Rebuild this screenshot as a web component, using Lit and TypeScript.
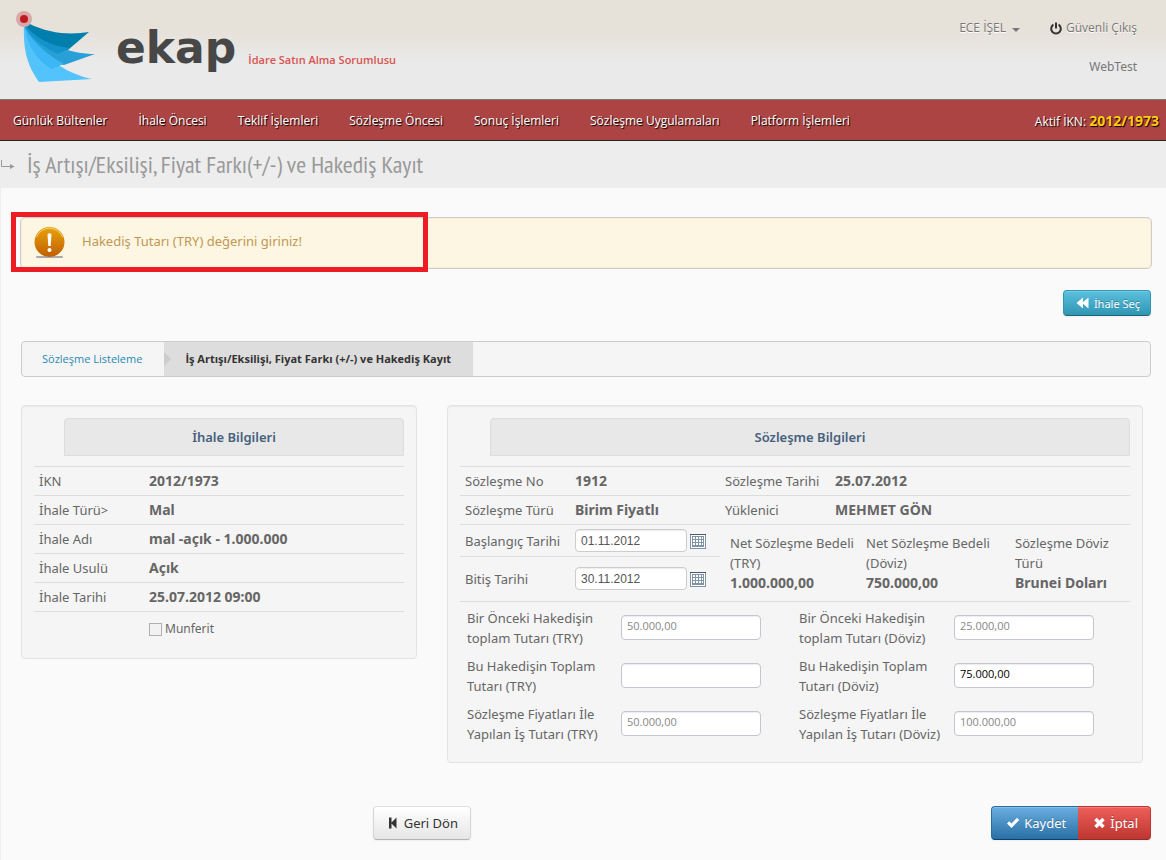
import { LitElement, html, css, svg } from "lit";
import { customElement, property } from "lit/decorators.js";

type Pair = [string, string];

const menu = [
  "Günlük Bültenler",
  "İhale Öncesi",
  "Teklif İşlemleri",
  "Sözleşme Öncesi",
  "Sonuç İşlemleri",
  "Sözleşme Uygulamaları",
  "Platform İşlemleri",
];

const tender: Pair[] = [
  ["İKN", "2012/1973"],
  ["İhale Türü>", "Mal"],
  ["İhale Adı", "mal -açık - 1.000.000"],
  ["İhale Usulü", "Açık"],
  ["İhale Tarihi", "25.07.2012 09:00"],
];

const contract: [Pair, Pair][] = [
  [["Sözleşme No", "1912"], ["Sözleşme Tarihi", "25.07.2012"]],
  [["Sözleşme Türü", "Birim Fiyatlı"], ["Yüklenici", "MEHMET GÖN"]],
];

const totals: Pair[] = [
  ["Net Sözleşme Bedeli (TRY)", "1.000.000,00"],
  ["Net Sözleşme Bedeli (Döviz)", "750.000,00"],
  ["Sözleşme Döviz Türü", "Brunei Doları"],
];

const amounts = [
  { id: "prev-try", label: "Bir Önceki Hakedişin toplam Tutarı (TRY)", value: "50.000,00", locked: true },
  { id: "prev-fx", label: "Bir Önceki Hakedişin toplam Tutarı (Döviz)", value: "25.000,00", locked: true },
  { id: "cur-try", label: "Bu Hakedişin Toplam Tutarı (TRY)", value: "", locked: false },
  { id: "cur-fx", label: "Bu Hakedişin Toplam Tutarı (Döviz)", value: "75.000,00", locked: false },
  { id: "work-try", label: "Sözleşme Fiyatları İle Yapılan İş Tutarı (TRY)", value: "50.000,00", locked: true },
  { id: "work-fx", label: "Sözleşme Fiyatları İle Yapılan İş Tutarı (Döviz)", value: "100.000,00", locked: true },
];

const calendarIcon = svg`
  <svg width="16" height="16" viewBox="0 0 16 16" aria-hidden="true">
    <rect x="0.5" y="1.5" width="15" height="14" fill="#fff" stroke="#7d93a8"/>
    <rect x="0" y="1" width="16" height="1" fill="#4a5a6b"/>
    <rect x="2" y="3" width="12" height="11" fill="#8194a6"/>
    <path d="M3 4h2v2H3zM6 4h2v2H6zM9 4h2v2H9zM12 4h1v2h-1zM3 7h2v2H3zM6 7h2v2H6zM9 7h2v2H9zM12 7h1v2h-1zM3 10h2v2H3zM6 10h2v2H6zM9 10h2v2H9zM12 10h1v2h-1z" fill="#fff"/>
  </svg>`;

@customElement("date-row")
class DateRow extends LitElement {
  @property() label = "";
  @property() value = "";

  static styles = css`
    :host { display: block; }
    .row { display: grid; grid-template-columns: 110px 112px auto; align-items: center; justify-content: start; }
    input {
      box-sizing: border-box; width: 112px; height: 23px; padding: 0 5px; border: 1px solid #ccc; border-radius: 4px;
      background: #fff; color: #555; font: 12px "Liberation Sans", sans-serif; box-shadow: inset 0 1px 1px rgba(0, 0, 0, .075);
    }
    button { display: flex; margin: 0 0 0 3px; padding: 0; border: 0; background: none; }
  `;

  render() {
    return html`
      <div class="row">
        <label for="date">${this.label}</label>
        <input id="date" type="text" .value=${this.value}>
        <button type="button" aria-label="Takvim">${calendarIcon}</button>
      </div>`;
  }
}

@customElement("app-root")
class AppRoot extends LitElement {
  static styles = css`
    :host {
      display: block; min-height: 100vh; background: #fafafa; color: #666;
      font: 13px/20px "Noto Sans", "Open Sans", sans-serif;
    }
    a { color: inherit; text-decoration: none; }
    button { font-family: inherit; cursor: pointer; }
    h1, h2 { margin: 0; }
    table { width: 100%; border-collapse: collapse; table-layout: fixed; }
    th, td { padding: 4px 5px; text-align: left; font-weight: 400; border-bottom: 1px solid #ddd; }
    td { font-weight: 700; font-size: 14px; }

    .header {
      box-sizing: border-box; height: 100px; display: flex; justify-content: space-between; padding: 0 29px 0 14px;
      background: linear-gradient(#e6e1d9 0, #e6e1d9 30px, #eaeaea 62px); border-bottom: 1px solid #777;
    }
    .brand { display: flex; align-items: flex-start; }
    .mark { display: block; margin-top: 10px; }
    .word { margin: 24px 0 0 20px; font: 700 44px/48px "DejaVu Sans", sans-serif; color: #474747; }
    .role { margin: 50px 0 0 12px; font: 600 11px/20px "Open Sans", sans-serif; color: #d9534f; }
    .account { display: flex; flex-direction: column; align-items: flex-end; gap: 19px; padding-top: 18px; font-size: 12px; color: #777; }
    .links { display: flex; gap: 30px; text-shadow: 0 1px 0 #fff; }
    .links a { display: flex; align-items: center; gap: 4px; font-family: "Open Sans", sans-serif; }
    .caret { margin: 4px 0 0 2px; border: 4px solid transparent; border-top-color: #777; border-bottom: 0; }

    .nav {
      display: flex; align-items: center; justify-content: space-between; height: 38px; padding: 2px 7px 0 13px;
      background: #ac4444; border-bottom: 1px solid #222; color: #fff; text-shadow: 1px 1px 1px #000;
      font-family: "Open Sans", sans-serif; font-size: 12px;
    }
    .menu { display: flex; gap: 31px; margin: 0; padding: 0; list-style: none; }
    .active b { color: #fc1; font-size: 14px; }

    .title { display: flex; align-items: center; gap: 12px; height: 47px; background: #ededed; }
    .title h1 { font: 400 24px/32px "PT Sans Narrow", "Open Sans Condensed", "Roboto Condensed", "Noto Sans Condensed", "Liberation Sans", sans-serif; color: #999; }

    .main { padding: 29px 15px 20px 20px; border-left: 1px solid #eee; }
    .alert {
      position: relative; box-sizing: border-box; height: 52px; display: flex; align-items: center; gap: 17px; margin: 0 -1px; padding: 0 13px;
      border: 1px solid #ccc; border-radius: 5px; background: #fdf6e3; color: #c09853;
      box-shadow: inset 0 0 1px 1px #fbeed5;
    }
    .alert p { margin: 0 0 5px; }
    .outline { position: absolute; left: -10px; top: -6px; width: 407px; height: 50px; border: 5px solid #ed1c24; }

    .pick-row { display: flex; justify-content: flex-end; margin: 21px 0 25px; }
    .btn {
      box-sizing: border-box; display: flex; align-items: center; justify-content: center; height: 34px;
      border: 1px solid; border-radius: 4px; font-size: 13px; color: #fff; text-shadow: 0 -1px 0 rgba(0, 0, 0, .25);
      box-shadow: inset 0 1px 0 rgba(255, 255, 255, .2), 0 1px 2px rgba(0, 0, 0, .05);
    }
    .info { height: 26px; padding: 0 10px 0 12px; gap: 5px; font-size: 11px; border-color: #2f96b4 #2f96b4 #1f6377; background: linear-gradient(#5bc0de, #2f96b4); }
    .plain { padding: 0 12px; gap: 4px; color: #333; text-shadow: none; border-color: #e0e0e0 #d5d5d5 #b3b3b3; background: linear-gradient(#fff, #e6e6e6); }
    .primary { padding: 0 12px 0 14px; gap: 4px; border-color: #2a6da0 #2a6da0 #08406f; background: linear-gradient(#6aafe0, #2a6fa5); border-radius: 4px 0 0 4px; border-right: 0; }
    .danger { padding: 0 12px 0 15px; gap: 4px; border-color: #bd362f #bd362f #952a25; background: linear-gradient(#ee5f5b, #bd362f); border-radius: 0 4px 4px 0; border-left: 0; }

    .crumbs { display: flex; box-sizing: border-box; height: 36px; border: 1px solid #ccc; border-radius: 4px; background: #f5f5f5; font: 11px/34px "Open Sans", sans-serif; }
    .crumbs a { padding: 0 22px 0 20px; color: #2a8ab5; }
    .crumbs .here { position: relative; padding: 0 22px 0 21px; background: #ddd; color: #333; font-weight: 700; }
    .here::before { content: ""; position: absolute; left: 0; top: 10px; border: 7px solid transparent; border-left-color: #ccc; border-right: 0; }

    .panels { display: grid; grid-template-columns: 396fr 696fr; gap: 30px; align-items: start; margin: 28px 8px 0 0; }
    .panel { box-sizing: border-box; padding: 12px; border: 1px solid #e3e3e3; border-radius: 4px; background: #f5f5f5; box-shadow: inset 0 1px 1px rgba(0, 0, 0, .05); }
    .panel h2 {
      margin: 0 0 10px 30px; border: 1px solid #ddd; border-radius: 4px 4px 0 0; background: #e8e8e8;
      font-size: 13px; line-height: 36px; font-weight: 600; color: #46607c; text-align: center;
    }
    .panel table { border-top: 1px solid #ddd; }
    .tender col:first-child { width: 110px; }
    .single { display: flex; align-items: center; gap: 3px; padding: 7px 0 7px 115px; font-size: 12px; }
    .single input { appearance: none; width: 13px; height: 13px; margin: 0; border: 1px solid #b0b0b0; background: #f2f2f2; }

    .middle { display: grid; grid-template-columns: 260px 1fr; border-bottom: 1px solid #ddd; }
    .dates date-row { padding: 4px 5px; }
    .dates date-row:first-child { border-bottom: 1px solid #ddd; }
    .dates date-row:last-child { padding: 10px 5px 11px; }
    .totals { display: grid; grid-template-columns: 136px 149px 1fr; margin: 0; padding: 8px 0 0 10px; }
    .totals dt { padding-right: 10px; }
    .totals dd { margin: 0; font-weight: 700; font-size: 14px; }
    .amounts { display: grid; grid-template-columns: 144px 140px 173px 140px; row-gap: 8px; column-gap: 10px; padding: 6px 0 6px 7px; }
    .amounts label:nth-of-type(even) { margin-left: 28px; }
    .amounts input {
      box-sizing: border-box; width: 140px; height: 25px; margin-top: 7px; padding: 0 5px 4px; border: 1px solid #c5c5ce; border-radius: 4px;
      background: #fff; color: #000; font: 11px "Open Sans", sans-serif; box-shadow: inset 0 1px 1px rgba(0, 0, 0, .075);
    }
    .amounts input:disabled { color: #888; }

    .actions { display: grid; grid-template-columns: 450px 1fr; margin-top: 43px; justify-items: end; }
    .group { display: flex; }
  `;

  private mark() {
    return svg`
      <svg class="mark" width="82" height="74" viewBox="0 0 82 74" aria-hidden="true">
        <path d="M14 13C35 24 57 25 75 22L48 45C32 40 20 28 10 15Z" fill="#007fac"/>
        <path d="M11 15C25 34 58 44 81 44L50 55C30 52 16 38 10 16Z" fill="#289fd7"/>
        <path d="M10 15C18 43 53 64 78 69L25 72C14 56 9 42 10 15Z" fill="#52c3fb"/>
        <path d="M12 16C22 29 38 36 56 38L44 44C28 37 17 28 11 16Z" fill="#1492cb"/>
        <path d="M11 18C20 34 35 46 50 54L37 59C21 48 13 34 11 18Z" fill="#3db6f5"/>
        <circle cx="10" cy="9" r="8" fill="#dba8aa"/>
        <circle cx="10" cy="9" r="4" fill="#bd1a22"/>
      </svg>`;
  }

  render() {
    return html`
      <header class="header">
        <div class="brand">
          ${this.mark()}
          <span class="word">ekap</span>
          <span class="role">İdare Satın Alma Sorumlusu</span>
        </div>
        <div class="account">
          <div class="links">
            <a href="#">ECE İŞEL <span class="caret"></span></a>
            <a href="#">
              <svg width="12" height="13" viewBox="0 0 12 13" aria-hidden="true">
                <path d="M3.4 2.7A4.8 4.8 0 1 0 8.6 2.7M6 0.5V6.5" fill="none" stroke="#333" stroke-width="2"/>
              </svg>
              Güvenli Çıkış
            </a>
          </div>
          <span>WebTest</span>
        </div>
      </header>
      <nav class="nav">
        <ul class="menu">${menu.map((m) => html`<li><a href="#">${m}</a></li>`)}</ul>
        <span class="active">Aktif İKN: <b>2012/1973</b></span>
      </nav>
      <div class="title">
        <svg width="15" height="12" viewBox="0 0 15 12" aria-hidden="true">
          <path d="M1.5 1V7.5H13" fill="none" stroke="#999"/><path d="M10 5l4.5 2.5L10 10z" fill="#999"/>
        </svg>
        <h1>İş Artışı/Eksilişi, Fiyat Farkı(+/-) ve Hakediş Kayıt</h1>
      </div>
      <main class="main">
        <div class="alert" role="alert">
          <svg width="31" height="33" viewBox="0 0 31 33" aria-hidden="true">
            <defs><linearGradient id="amber" x1="0" y1="0" x2="0" y2="1"><stop offset="0" stop-color="#e9a20d"/><stop offset="1" stop-color="#c05f00"/></linearGradient></defs>
            <rect x="2" y="29" width="27" height="2" rx="1" fill="#aaa"/>
            <circle cx="15.500" cy="15" r="15" fill="url(#amber)"/>
            <path d="M2.500 10A14 14 0 0 1 28.500 10" fill="none" stroke="#f5d070"/>
            <path d="M13.500 7.500Q15.500 5 17.500 7.500L16.700 19H14.300Z" fill="#fff"/>
            <circle cx="15.500" cy="23" r="2" fill="#fff"/>
          </svg>
          <p>Hakediş Tutarı (TRY) değerini giriniz!</p>
          <span class="outline"></span>
        </div>
        <div class="pick-row">
          <button type="button" class="btn info">
            <svg width="13" height="12" viewBox="0 0 13 12" aria-hidden="true"><path d="M7 0.500V11.500L0.500 6ZM12.500 0.500V11.500L6 6Z" fill="#fff"/></svg>
            İhale Seç
          </button>
        </div>
        <nav class="crumbs">
          <a href="#">Sözleşme Listeleme</a>
          <span class="here" aria-current="page">İş Artışı/Eksilişi, Fiyat Farkı (+/-) ve Hakediş Kayıt</span>
        </nav>
        <div class="panels">
          <section class="panel tender">
            <h2>İhale Bilgileri</h2>
            <table>
              <colgroup><col><col></colgroup>
              <tbody>${tender.map(([k, v]) => html`<tr><th scope="row">${k}</th><td>${v}</td></tr>`)}</tbody>
            </table>
            <label class="single"><input type="checkbox">Munferit</label>
          </section>
          <section class="panel">
            <h2>Sözleşme Bilgileri</h2>
            <table>
              <colgroup><col width="110"><col width="150"><col width="110"><col></colgroup>
              <tbody>
                ${contract.map((row) => html`<tr>${row.map(([k, v]) => html`<th scope="row">${k}</th><td>${v}</td>`)}</tr>`)}
              </tbody>
            </table>
            <div class="middle">
              <div class="dates">
                <date-row label="Başlangıç Tarihi" value="01.11.2012"></date-row>
                <date-row label="Bitiş Tarihi" value="30.11.2012"></date-row>
              </div>
              <dl class="totals">
                ${totals.map(([k, v]) => html`<div><dt>${k}</dt><dd>${v}</dd></div>`)}
              </dl>
            </div>
            <div class="amounts">
              ${amounts.map((a) => html`
                <label for=${a.id}>${a.label}</label>
                <input id=${a.id} type="text" .value=${a.value} ?disabled=${a.locked}>`)}
            </div>
          </section>
        </div>
        <div class="actions">
          <button type="button" class="btn plain">
            <svg width="14" height="12" viewBox="0 0 14 12" aria-hidden="true"><path d="M3 0.500H5.500V5.500L10.500 0.500V11.500L5.500 6.500V11.500H3Z" fill="#333"/></svg>
            Geri Dön
          </button>
          <div class="group">
            <button type="button" class="btn primary">
              <svg width="14" height="12" viewBox="0 0 14 12" aria-hidden="true"><path d="M1 6.500L3.200 4.300L5.500 6.500L11 0.800L13.200 3L5.500 11Z" fill="#fff"/></svg>
              Kaydet
            </button>
            <button type="button" class="btn danger">
              <svg width="13" height="12" viewBox="0 0 13 12" aria-hidden="true"><path d="M2.500 2L10.500 10M10.500 2L2.500 10" stroke="#fff" stroke-width="3.400"/></svg>
              İptal
            </button>
          </div>
        </div>
      </main>`;
  }
}
